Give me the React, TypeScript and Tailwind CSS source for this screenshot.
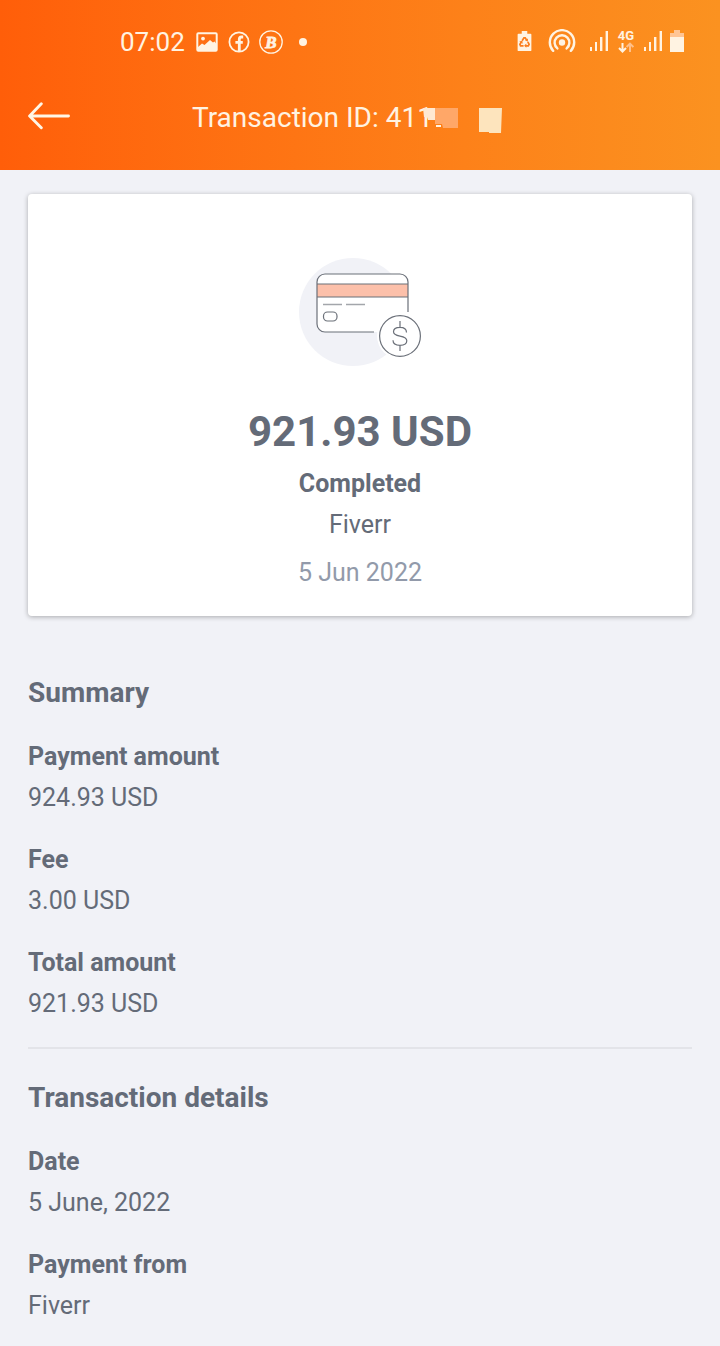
interface DetailItem {
  label: string;
  value: string;
}

interface DetailSectionProps {
  title: string;
  items: DetailItem[];
}

const summary: DetailItem[] = [
  { label: "Payment amount", value: "924.93 USD" },
  { label: "Fee", value: "3.00 USD" },
  { label: "Total amount", value: "921.93 USD" },
];

const details: DetailItem[] = [
  { label: "Date", value: "5 June, 2022" },
  { label: "Payment from", value: "Fiverr" },
];

function SignalIcon() {
  return (
    <svg width="18" height="22" viewBox="0 0 18 22" fill="#fff3e2" aria-hidden="true">
      <rect x="0" y="17" width="2" height="4" />
      <rect x="5" y="12" width="2" height="9" />
      <rect x="10" y="7" width="2.400" height="14" />
      <rect x="15.600" y="1" width="2.400" height="20" />
    </svg>
  );
}

function StatusBar() {
  return (
    <div className="flex h-11 items-center justify-between pl-[120px] pr-9 text-[#fff3e2]">
      <div className="flex items-center">
        <span className="text-[26px] leading-8">07:02</span>
        <svg className="ml-2.5" width="24" height="22" viewBox="0 0 24 22" aria-hidden="true">
          <rect x="2.3" y="2.3" width="19.4" height="17.4" rx="1" fill="none" stroke="#fff3e2" strokeWidth="2" />
          <circle cx="8" cy="7.6" r="1.9" fill="#fff3e2" />
          <path d="M3 16l4-3.500 2.500 1.500 5.500-5 3 2.500 1.500-1 2 2.500V20H3z" fill="#fff3e2" />
        </svg>
        <svg className="ml-2" width="24" height="24" viewBox="0 0 24 24" fill="none" aria-hidden="true">
          <circle cx="12" cy="12" r="9.6" stroke="#fff3e2" strokeWidth="1.8" />
          <path d="M16.2 7h-1.700c-1.500 0-2.200.8-2.200 2.400V21M8.400 12.400h7.400" stroke="#fff3e2" strokeWidth="2.8" />
        </svg>
        <svg className="ml-2" width="24" height="26" viewBox="1 0 24 26" aria-hidden="true">
          <circle cx="13" cy="13" r="11.2" fill="none" stroke="#fff3e2" strokeWidth="1.3" />
          <text
            x="13"
            y="19"
            textAnchor="middle"
            fill="#fff3e2"
            stroke="#fff3e2"
            strokeWidth="0.8"
            className="font-['Liberation_Serif',serif] text-[17px] font-bold italic"
          >
            B
          </text>
        </svg>
        <span className="ml-4 size-2 rounded-full bg-[#fff3e2]" />
      </div>

      <div className="flex items-center pb-0.5">
        <svg width="15" height="22" viewBox="0 0 16 24" aria-hidden="true">
          <path d="M5 1h6v3h3.500q1 0 1 1v17q0 1-1 1h-13q-1 0-1-1V5q0-1 1-1H5z" fill="#fff3e2" />
          <g fill="none" stroke="#fb7d1c" strokeWidth="1.9">
            <path d="M5.400 11.800l2-3.200h1.400l1.600 2.600" />
            <path d="M11.600 13l1.400 2.600-.8 1.600H9.200" />
            <path d="M7 17.200H3.700L3 15.700l1.400-2.500" />
          </g>
          <path d="M11.700 9.400v3.400l-3-1.500zM10 14.800v4.600l-2.400-2.300zM2.300 12.600l3.400-.9.3 3.400z" fill="#fb7d1c" />
        </svg>
        <svg className="ml-4" width="28" height="24" viewBox="0 0 28 24" fill="none" aria-hidden="true">
          <circle cx="14" cy="13.500" r="3.2" fill="#fff3e2" />
          <g stroke="#fff3e2" strokeWidth="2.4" strokeLinecap="round">
            <path d="M9.400 19.400a7.400 7.400 0 1 1 9.200 0" />
            <path d="M5.200 21.800a12.200 12.200 0 1 1 17.600 0" />
          </g>
        </svg>
        <span className="ml-3.5 flex">
          <SignalIcon />
        </span>
        <span className="ml-2 flex w-5 flex-col items-center">
          <span className="text-[13px] font-bold leading-[13px]">4G</span>
          <svg width="16" height="11" viewBox="0 0 16 11" fill="none" strokeWidth="2" aria-hidden="true">
            <path d="M4.500 1v8.500M1 6l3.500 3.500L8 6" stroke="#fff3e2" />
            <path d="M12 10V2M8.600 5L12 1.600 15.400 5" stroke="#ffc08a" />
          </svg>
        </span>
        <span className="ml-2 flex">
          <SignalIcon />
        </span>
        <svg className="ml-2" width="14" height="22" viewBox="0 0 14 22" aria-hidden="true">
          <path d="M4 0h6v3h4v5H0V3h4z" fill="#ffc595" />
          <rect x="0" y="7" width="14" height="15" fill="#fff3e2" />
        </svg>
      </div>
    </div>
  );
}

function Header() {
  return (
    <header className="h-[170px] bg-linear-to-r from-[#ff5e09] to-[#fb9220] pt-5">
      <StatusBar />
      <div className="mt-8 flex h-11 items-center pl-7">
        <button type="button" aria-label="Back" className="flex pb-1">
          <svg width="42" height="28" viewBox="0 0 42 28" fill="none" stroke="#fff6e6" strokeWidth="2.9" strokeLinecap="round" strokeLinejoin="round">
            <path d="M40.500 14H1.800M13.300 1.800L1.600 14l11.700 11.700" />
          </svg>
        </button>
        <h1 className="relative ml-[122px] text-[28px] leading-8 text-[#fff3e2]">
          Transaction ID: 411
          <svg className="absolute left-full top-0 -ml-2.5" width="90" height="34" viewBox="0 0 90 34" aria-hidden="true">
            <path d="M12 6h23v20H20l-1-4h-7z" fill="#ffa768" />
            <path d="M0 6h12v12H5l-1-3H1z" fill="#ffe9d3" />
            <path d="M13 23h5v2h-5z" fill="#fff3e2" />
            <path d="M56 6h23l-1 25H66v-1H56z" fill="#fde4bd" />
          </svg>
        </h1>
      </div>
    </header>
  );
}

function CardIllustration() {
  return (
    <svg width="122" height="108" viewBox="0 0 122 108" fill="none" aria-hidden="true">
      <circle cx="54" cy="54" r="54" fill="#f1f2f7" />
      <rect x="18" y="16" width="91" height="58" rx="8" fill="#fff" />
      <circle cx="101" cy="78" r="23" fill="#fff" />
      <rect x="18" y="26" width="91" height="13" fill="#fcc0aa" />
      <g stroke="#6b7079" strokeWidth="1.2">
        <path d="M75 74H26a8 8 0 0 1-8-8V24a8 8 0 0 1 8-8h75a8 8 0 0 1 8 8v30" />
        <path d="M18 26h91M18 39h91" />
        <rect x="24.500" y="54" width="13.500" height="9" rx="4" />
        <circle cx="101" cy="78" r="20.400" />
        <path d="M101 63v6M101 87v6M107.500 74.500c0-3.300-2.600-5.200-6.500-5.200s-6.500 1.800-6.500 4.500c0 3 3 3.700 6.500 4.300 3.800.7 6.800 1.600 6.800 4.700 0 3-2.800 4.500-6.800 4.500-4 0-7-1.700-7-5" />
      </g>
      <path d="M24 46.500h19M47 46.500h19" stroke="#a3a6ab" strokeWidth="1.400" />
    </svg>
  );
}

function DetailSection({ title, items }: DetailSectionProps) {
  return (
    <section>
      <h2 className="text-[28px] font-bold leading-8">{title}</h2>
      <dl className="mt-[33px] space-y-8">
        {items.map((item) => (
          <div key={item.label}>
            <dt className="font-bold">{item.label}</dt>
            <dd className="mt-[11px]">{item.value}</dd>
          </div>
        ))}
      </dl>
    </section>
  );
}

export default function App() {
  return (
    <div className="min-h-screen bg-[#f1f2f7] font-[Roboto,sans-serif] text-[25px] leading-[30px] text-[#646b78]">
      <Header />
      <main className="px-7 pb-6 pt-6">
        <section className="flex flex-col items-center rounded-sm bg-white pb-7 pt-16 shadow-[0_1px_5px_rgba(0,0,0,0.3)]">
          <CardIllustration />
          <p className="mt-[42px] text-[42px] font-bold leading-[48px]">921.93 USD</p>
          <p className="mt-[13px] font-bold">Completed</p>
          <p className="mt-[11px]">Fiverr</p>
          <p className="mt-[18px] text-[#929aaa]">5 Jun 2022</p>
        </section>

        <div className="mt-[61px]">
          <DetailSection title="Summary" items={summary} />
          <hr className="mb-[33px] mt-7 border-t-2 border-[#e3e4e9]" />
          <DetailSection title="Transaction details" items={details} />
        </div>
      </main>
    </div>
  );
}
